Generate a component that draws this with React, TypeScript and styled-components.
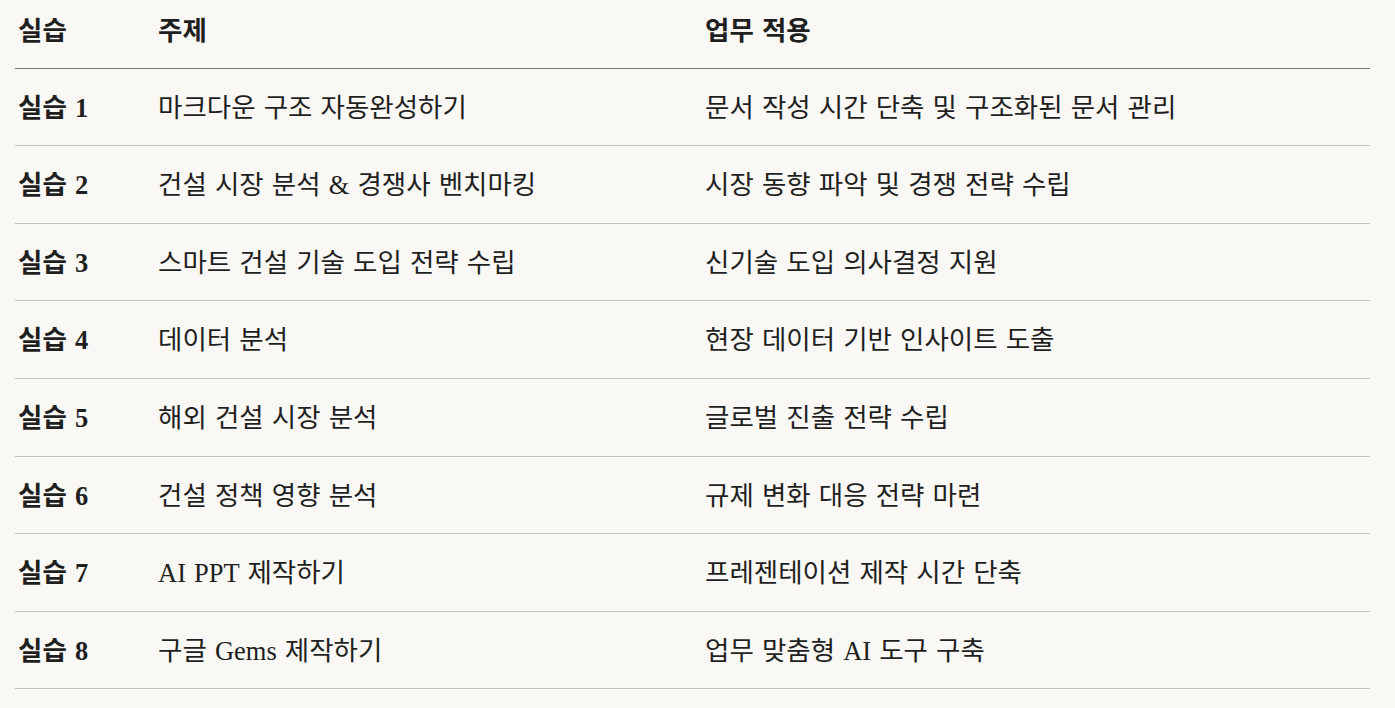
import React from "react";
import styled, { createGlobalStyle } from "styled-components";

const GlobalStyle = createGlobalStyle`
  html, body {
    margin: 0;
    padding: 0;
    background: #f9f8f4;
  }
  body {
    font-family: "Liberation Serif", "Noto Sans CJK KR", serif;
    color: #1f1f1f;
  }
`;

const Page = styled.div`
  padding: 0 25px 0 15px;
`;

const Table = styled.div`
  display: grid;
  grid-template-columns: 140px 547px 1fr;
  font-size: 26.5px;
  line-height: 33.6px;
  word-spacing: 1.5px;
`;

const HeadCell = styled.div`
  padding: 15px 3px 19px;
  font-weight: 600;
  border-bottom: 1px solid #7a7a78;
`;

const Cell = styled.div<{ $bold?: boolean }>`
  padding: 23px 3px 20px;
  font-weight: ${(p) => (p.$bold ? 600 : 400)};
  border-bottom: 1px solid #c4c3c0;
  white-space: nowrap;
`;

const rows = [
  ["마크다운 구조 자동완성하기", "문서 작성 시간 단축 및 구조화된 문서 관리"],
  ["건설 시장 분석 & 경쟁사 벤치마킹", "시장 동향 파악 및 경쟁 전략 수립"],
  ["스마트 건설 기술 도입 전략 수립", "신기술 도입 의사결정 지원"],
  ["데이터 분석", "현장 데이터 기반 인사이트 도출"],
  ["해외 건설 시장 분석", "글로벌 진출 전략 수립"],
  ["건설 정책 영향 분석", "규제 변화 대응 전략 마련"],
  ["AI PPT 제작하기", "프레젠테이션 제작 시간 단축"],
  ["구글 Gems 제작하기", "업무 맞춤형 AI 도구 구축"],
];

export default function App() {
  return (
    <>
      <GlobalStyle />
      <Page>
        <Table>
          <HeadCell>실습</HeadCell>
          <HeadCell>주제</HeadCell>
          <HeadCell>업무 적용</HeadCell>
          {rows.map(([topic, use], i) => (
            <React.Fragment key={i}>
              <Cell $bold>실습 {i + 1}</Cell>
              <Cell>{topic}</Cell>
              <Cell>{use}</Cell>
            </React.Fragment>
          ))}
        </Table>
      </Page>
    </>
  );
}
